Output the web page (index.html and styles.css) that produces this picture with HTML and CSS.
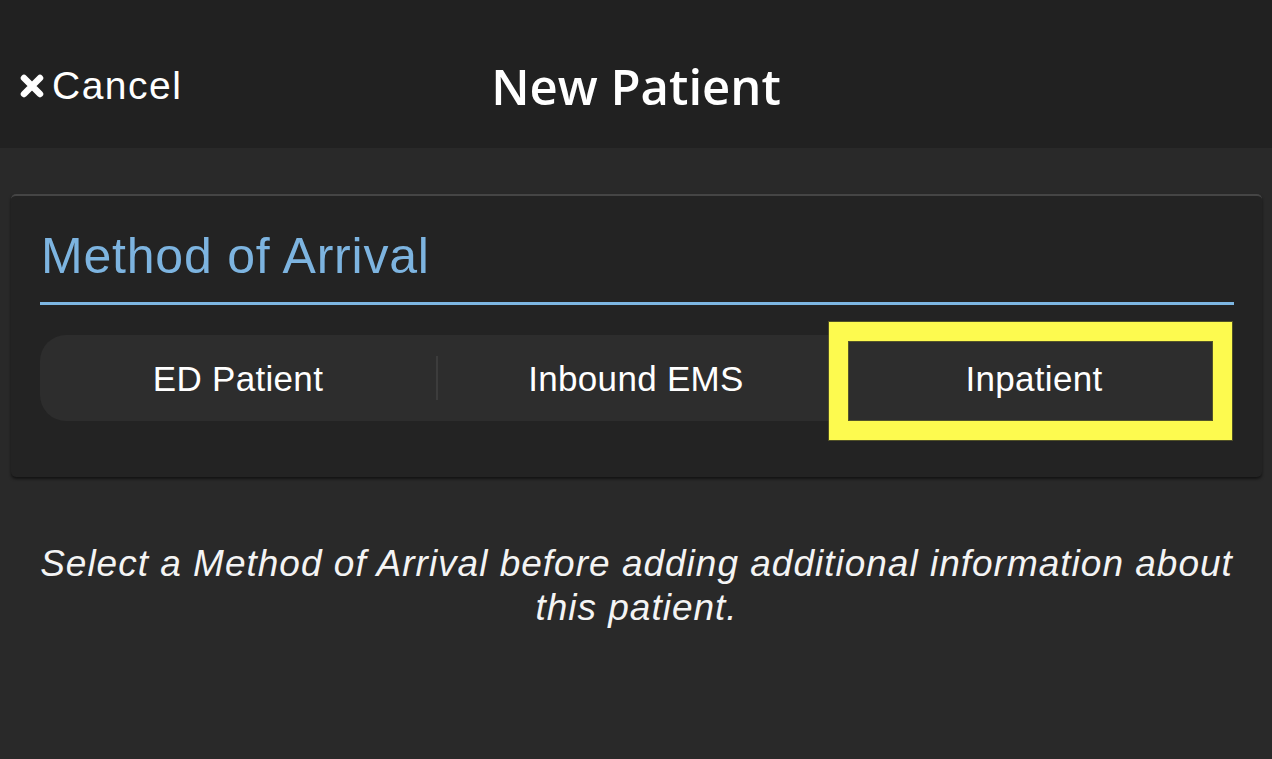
FILE: index.html
```html
<!DOCTYPE html>
<html>
<head>
<meta charset="utf-8">
<title>New Patient</title>
<link rel="stylesheet" href="styles.css">
</head>
<body>
<header class="topbar">
  <div class="cancel">
    <svg class="x-icon" width="24" height="24" viewBox="0 0 24 24" aria-hidden="true">
      <path d="M4 4 L20 20 M20 4 L4 20" stroke="#fff" stroke-width="6.5" stroke-linecap="round"/>
    </svg>
    <span>Cancel</span>
  </div>
  <h1 class="title">New Patient</h1>
  <div class="spacer"></div>
</header>
<main class="content">
  <section class="card">
    <h2 class="card-title">Method of Arrival</h2>
    <div class="segmented">
      <div class="segment">ED Patient</div>
      <div class="divider"></div>
      <div class="segment">Inbound EMS</div>
      <div class="divider hidden"></div>
      <div class="segment">Inpatient</div>
      <div class="highlight"></div>
    </div>
  </section>
  <p class="hint">Select a Method of Arrival before adding additional information about this patient.</p>
</main>
</body>
</html>
```
FILE: styles.css
```css
* { box-sizing: border-box; }
html, body {
  margin: 0;
  padding: 0;
  width: 1272px;
  height: 759px;
  overflow: hidden;
}
body {
  background: #292929;
  font-family: "Liberation Sans", Arial, sans-serif;
  color: #fff;
}
.topbar {
  height: 148px;
  background: #212121;
  display: grid;
  grid-template-columns: 1fr auto 1fr;
  align-items: center;
  padding-top: 24px;
}
.cancel {
  display: flex;
  align-items: center;
  padding-left: 20px;
  font-size: 39px;
  letter-spacing: 1.5px;
  gap: 8px;
  color: #fff;
}
.x-icon { display: block; }
.title {
  margin: 0;
  font-family: "Open Sans", sans-serif;
  font-weight: 600;
  font-size: 49px;
  line-height: 60px;
  color: #fff;
}
.content {
  padding: 46px 10px 0 11px;
}
.card {
  background: #232323;
  border-top: 2px solid #454545;
  border-radius: 5px;
  box-shadow: 0 2px 3px rgba(0, 0, 0, 0.55);
  padding: 0 28px 56px 29px;
}
.card-title {
  margin: 0;
  padding-top: 31px;
  padding-bottom: 17px;
  font-weight: 400;
  font-size: 50px;
  letter-spacing: 0.8px;
  line-height: 58px;
  color: #7db4e0;
  border-bottom: 3px solid #7db6e2;
  padding-left: 1px;
}
.segmented {
  position: relative;
  margin-top: 30px;
  height: 86px;
  width: 1192px;
  background: #2d2d2d;
  border-radius: 26px;
  display: flex;
  align-items: center;
}
.segment {
  flex: 1;
  text-align: center;
  font-size: 35px;
  letter-spacing: 0.3px;
  padding-top: 2px;
  color: #fff;
}
.divider {
  width: 2px;
  height: 44px;
  background: #3c3c3c;
}
.divider.hidden { background: transparent; }
.highlight {
  position: absolute;
  left: 789px;
  top: -13px;
  width: 403px;
  height: 118px;
  border: 19px solid #fdfa4f;
  box-shadow: 0 0 0 1px rgba(110, 110, 40, 0.6), inset 0 0 0 1px rgba(110, 110, 40, 0.6);
}
.hint {
  margin: 65px 0 0;
  padding: 0 26px;
  text-align: center;
  font-style: italic;
  font-size: 37px;
  letter-spacing: 1px;
  line-height: 44px;
  color: #f4f4f4;
}
```
